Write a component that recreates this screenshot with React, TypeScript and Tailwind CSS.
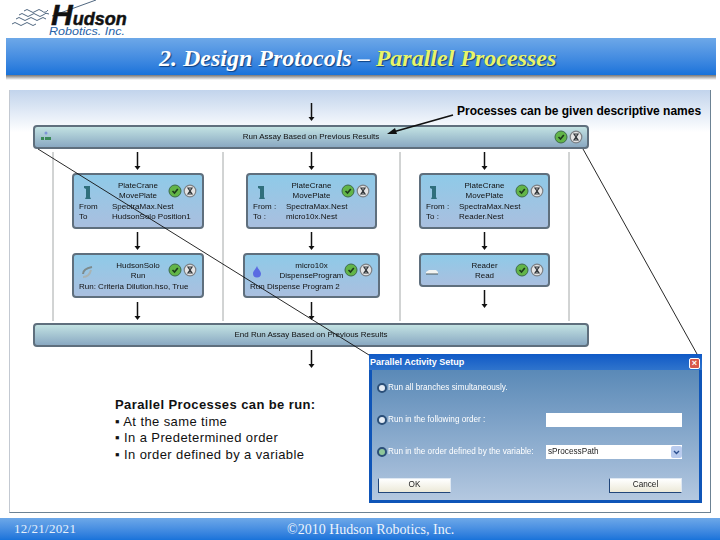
import React from 'react';

type CardData = {
  box: string;
  title: string[];
  icon: 'crane' | 'solo' | 'drop' | 'reader';
  rows?: string[][];
  line?: string;
  statusBox: string;
  iconBox: string;
};

const CARDS: CardData[] = [
  {
    box: 'left-[62px] top-[83px] w-[132px] h-[56px]',
    title: ['PlateCrane', 'MovePlate'],
    icon: 'crane',
    rows: [['From', 'SpectraMax.Nest'], ['To', 'HudsonSolo Position1']],
    statusBox: 'left-[94px] top-[9px]',
    iconBox: 'left-[6px] top-[9px]',
  },
  {
    box: 'left-[236px] top-[83px] w-[131px] h-[56px]',
    title: ['PlateCrane', 'MovePlate'],
    icon: 'crane',
    rows: [['From :', 'SpectraMax.Nest'], ['To :', 'micro10x.Nest']],
    statusBox: 'left-[93px] top-[9px]',
    iconBox: 'left-[6px] top-[9px]',
  },
  {
    box: 'left-[409px] top-[83px] w-[131px] h-[56px]',
    title: ['PlateCrane', 'MovePlate'],
    icon: 'crane',
    rows: [['From :', 'SpectraMax.Nest'], ['To :', 'Reader.Nest']],
    statusBox: 'left-[94px] top-[9px]',
    iconBox: 'left-[5px] top-[9px]',
  },
  {
    box: 'left-[62px] top-[163px] w-[132px] h-[45px]',
    title: ['HudsonSolo', 'Run'],
    icon: 'solo',
    line: 'Run: Criteria Dilution.hso, True',
    statusBox: 'left-[94px] top-[8px]',
    iconBox: 'left-[6px] top-[8px]',
  },
  {
    box: 'left-[233px] top-[163px] w-[137px] h-[45px]',
    title: ['micro10x', 'DispenseProgram'],
    icon: 'drop',
    line: 'Run Dispense Program 2',
    statusBox: 'left-[99px] top-[8px]',
    iconBox: 'left-[5px] top-[8px]',
  },
  {
    box: 'left-[409px] top-[163px] w-[131px] h-[34px]',
    title: ['Reader', 'Read'],
    icon: 'reader',
    statusBox: 'left-[94px] top-[8px]',
    iconBox: 'left-[4px] top-[8px]',
  },
];

const ARROWS = [
  [302, 13, 31],
  [128, 62, 80], [128, 142, 160], [128, 212, 230],
  [302, 62, 80], [302, 142, 160], [302, 212, 230],
  [475, 62, 80], [475, 142, 160], [475, 200, 218],
  [302, 260, 278],
];

const Status = ({ className }: { className: string }) => (
  <svg width="30" height="14" viewBox="0 0 30 14" className={`absolute ${className}`}>
    <circle cx="7" cy="7" r="6" fill="#62b548" stroke="#3d6b4a" strokeWidth="1" />
    <path d="M4.5 7 L6.5 9 L9.8 5" fill="none" stroke="#1c3a1c" strokeWidth="1.6" />
    <circle cx="22" cy="7" r="5.8" fill="#e4e4e4" stroke="#7d8185" strokeWidth="1.2" />
    <path d="M20 4 H24 L20 10 H24 Z" fill="none" stroke="#33383c" strokeWidth="1.2" />
  </svg>
);

const CardIcon = ({ kind, className }: { kind: CardData['icon']; className: string }) => (
  <svg width="14" height="16" viewBox="0 0 14 16" className={`absolute ${className}`}>
    {kind === 'crane' && (
      <path d="M4 2 H10 V13 L11 15 H5 L6 13 V5 L4 4 Z" fill="#2f6f7c" />
    )}
    {kind === 'solo' && (
      <g fill="none" stroke="#7d8b8c" strokeWidth="2">
        <path d="M3 11 C3 7 7 5 12 4" />
        <path d="M3 14 C7 14 10 11 11 7" stroke="#a9b3b3" />
      </g>
    )}
    {kind === 'drop' && (
      <path d="M7 3 C7.5 5.5 11 8 11 10.5 A4 4 0 0 1 3 10.5 C3 8 6 6 7 3 Z" fill="#5a6be2" />
    )}
    {kind === 'reader' && (
      <g>
        <path d="M1 9 L4 7 H11 L13 9 V11 H1 Z" fill="#f2f4f2" />
        <path d="M1 11 H13" stroke="#4b5a5e" strokeWidth="1" />
      </g>
    )}
  </svg>
);

const Card = ({ card }: { card: CardData }) => (
  <div className={`absolute ${card.box} rounded-[4px] border-2 border-[#5f6f7d] bg-gradient-to-b from-[#8ecae8] to-[#a9bfdf] text-[8px] leading-[10px] text-[#111] blur-[0.35px]`}>
    <CardIcon kind={card.icon} className={card.iconBox} />
    <Status className={card.statusBox} />
    <div className="flex flex-col items-center pt-[6px]">
      {card.title.map((t) => (
        <span key={t}>{t}</span>
      ))}
    </div>
    {card.rows && (
      <div className="mt-[1px] flex flex-col pl-[5px]">
        {card.rows.map(([a, b]) => (
          <div key={a} className="flex">
            <span className="w-[33px]">{a}</span>
            <span>{b}</span>
          </div>
        ))}
      </div>
    )}
    {card.line && <div className="mt-[1px] pl-[5px] whitespace-nowrap">{card.line}</div>}
  </div>
);

const Logo = () => (
  <svg width="135" height="38" viewBox="0 0 135 38" className="block">
    <g fill="none" stroke="#23405f" strokeWidth="0.8">
      <path d="M24 11 q3 -3 6 0 t6 0 t6 0 t6 -1" />
      <path d="M19 15 q3 -3 6 0 t6 0 t6 0 t6 0 t6 -1" />
      <path d="M16 19 q3 -3 6 0 t6 0 t6 0 t6 0 t6 0" />
      <path d="M12 24 q3 -3 6 0 t6 0 t6 0 t6 0" />
      <path d="M52 16 L96 0" />
    </g>
    <text x="51" y="25" fontFamily="'Liberation Sans', sans-serif" fontWeight="700" fontStyle="italic" fontSize="18" fill="#111" stroke="#111" strokeWidth="0.5">
      <tspan fontSize="30">H</tspan>
      <tspan>udson</tspan>
    </text>
    <text x="49" y="35" fontFamily="'Liberation Sans', sans-serif" fontStyle="italic" fontSize="10.5" fill="#2a64a8" textLength="76" lengthAdjust="spacingAndGlyphs">Robotics. Inc.</text>
  </svg>
);

const Radio = ({ on }: { on?: boolean }) => (
  <span className={`h-[10px] w-[10px] shrink-0 rounded-full border-2 border-[#2b4f78] ${on ? 'bg-[#8fc79a]' : 'bg-[#e6edf5]'}`} />
);

const Dialog = () => (
  <div className="absolute left-[359px] top-[264px] flex h-[149px] w-[333px] flex-col border-x-[3px] border-b-[3px] border-[#0f55b8] bg-gradient-to-b from-[#4f82b2] to-[#b4c8e0] text-[8.2px] text-white">
    <div className="-mx-[3px] flex h-[16px] items-center justify-between bg-gradient-to-b from-[#0f59c6] to-[#2f74cc] pl-[1px] pr-[2px] pt-[2px] text-[9px] font-bold text-white">
      <span>Parallel Activity Setup</span>
      <span className="flex h-[11px] w-[11px] items-center justify-center rounded-[2px] border border-white bg-[#d8574a] text-[9px] leading-none">×</span>
    </div>
    <div className="flex flex-1 flex-col pl-[5px] pr-[17px] pt-[2px] blur-[0.25px]">
      <div className="flex h-[32px] items-center gap-[1px]">
        <Radio />
        <span>Run all branches simultaneously.</span>
      </div>
      <div className="flex h-[32px] items-center">
        <div className="flex w-[169px] items-center gap-[1px]">
          <Radio />
          <span>Run in the following order :</span>
        </div>
        <div className="h-[14px] flex-1 bg-white" />
      </div>
      <div className="flex h-[32px] items-center">
        <div className="flex w-[169px] items-center gap-[1px]">
          <Radio on />
          <span>Run in the order defined by the variable:</span>
        </div>
        <div className="flex h-[14px] flex-1 items-center justify-between bg-white pl-[2px] text-[#222]">
          <span>sProcessPath</span>
          <span className="flex h-[12px] w-[11px] items-center justify-center rounded-[2px] bg-[#b9cbee]">
            <svg width="7" height="5" viewBox="0 0 7 5"><path d="M1 1 L3.5 3.5 L6 1" fill="none" stroke="#2c4f8f" strokeWidth="1.4" /></svg>
          </span>
        </div>
      </div>
      <div className="mt-[10px] flex justify-between pl-[1px]">
        <button className="h-[15px] w-[73px] border border-[#21467a] border-r-[#dfe8f2] border-t-[#dfe8f2] bg-gradient-to-b from-white to-[#ece9d8] text-[8.2px] text-[#222]">OK</button>
        <button className="h-[15px] w-[73px] border border-[#21467a] border-r-[#dfe8f2] border-t-[#dfe8f2] bg-gradient-to-b from-white to-[#ece9d8] text-[8.2px] text-[#222]">Cancel</button>
      </div>
    </div>
  </div>
);

const Diagram = () => (
  <>
    <div className="absolute left-[23px] top-[35px] flex h-[24px] w-[556px] items-center justify-center rounded-[4px] border-2 border-[#5f6f7d] bg-gradient-to-b from-[#c2e2e2] to-[#8aa9c2] text-[8px] text-[#111] blur-[0.35px]">
      Run Assay Based on Previous Results
      <svg width="12" height="12" viewBox="0 0 12 12" className="absolute left-[5px] top-[3px]">
        <circle cx="6" cy="3" r="1.5" fill="#7f95d8" />
        <rect x="1" y="7" width="3" height="3" fill="#3b8a5a" />
        <rect x="5" y="7" width="6" height="3" fill="#3b8a5a" />
      </svg>
      <Status className="left-[519px] top-[3px]" />
    </div>
    <div className="absolute left-[23px] top-[233px] flex h-[24px] w-[556px] items-center justify-center rounded-[4px] border-2 border-[#5f6f7d] bg-gradient-to-b from-[#c2e2e2] to-[#8aa9c2] text-[8px] text-[#111] blur-[0.35px]">
      End Run Assay Based on Previous Results
    </div>
    {CARDS.map((c, i) => (
      <Card key={i} card={c} />
    ))}
    <svg width="702" height="423" viewBox="0 0 702 423" className="pointer-events-none absolute -left-px top-0">
      {[44, 214, 391, 560].map((x) => (
        <path key={x} d={`M${x} 62 V231`} stroke="#a4a8a8" strokeWidth="1" />
      ))}
      {ARROWS.map(([x, a, b], i) => (
        <g key={i}>
          <path d={`M${x + 0.5} ${a} V${b - 3}`} stroke="#111" strokeWidth="1.5" />
          <path d={`M${x - 2.5} ${b - 4} H${x + 3.5} L${x + 0.5} ${b} Z`} fill="#111" />
        </g>
      ))}
      <path d="M29 59 L360 265" stroke="#111" strokeWidth="0.9" />
      <path d="M574 59 L688 264" stroke="#111" strokeWidth="0.9" />
      <path d="M444 25 L384 42" stroke="#111" strokeWidth="1.8" />
      <path d="M378 44 L386 38 L388 44 Z" fill="#111" />
    </svg>
  </>
);

const App: React.FC = () => {
  return (
    <div className="flex h-[540px] w-[720px] flex-col overflow-hidden bg-white font-['Liberation_Sans',sans-serif]">
      <header className="h-[38px] shrink-0">
        <Logo />
      </header>
      <div className="ml-[6px] w-[710px] shrink-0">
        <div className="flex h-[37px] items-center bg-gradient-to-b from-[#6da8e8] to-[#1873da] pl-[153px] pt-[3px] font-['Liberation_Serif',serif] text-[24px] font-bold italic text-white [text-shadow:1px_1px_1px_#0b3f80]">
          <span>2. Design Protocols – <span className="text-[#e8f56a]">Parallel Processes</span></span>
        </div>
        <div className="h-[5px] bg-gradient-to-b from-[#777] to-white" />
      </div>
      <main className="relative ml-[9px] mt-[10px] h-[423px] w-[702px] shrink-0 border-b border-l border-r border-b-[#6c8294] border-l-[#c3c9d2] border-r-[#6c8294] bg-gradient-to-b from-[#c2d4ec] to-white to-[10%]">
        <Diagram />
        <p className="absolute left-[447px] top-[14px] whitespace-nowrap text-[12px] font-bold leading-[15px] text-black">
          Processes can be given descriptive names
        </p>
        <div className="absolute left-[105px] top-[307px] text-[13px] leading-[16.7px] tracking-[0.4px] text-[#111]">
          <p className="font-bold">Parallel Processes can be run:</p>
          <p>▪ At the same time</p>
          <p>▪ In a Predetermined order</p>
          <p>▪ In order defined by a variable</p>
        </div>
        <Dialog />
      </main>
      <footer className="mt-[5px] flex h-[22px] shrink-0 items-center bg-gradient-to-b from-[#6da8e8] to-[#1873da] font-['Liberation_Serif',serif] text-white">
        <span className="w-[287px] pl-[14px] text-[13px] tracking-[0.3px] text-[#e6f0fb]">12/21/2021</span>
        <span className="text-[14px] text-[#eef4fb]">©2010 Hudson Robotics, Inc.</span>
      </footer>
    </div>
  );
};

export default App;
